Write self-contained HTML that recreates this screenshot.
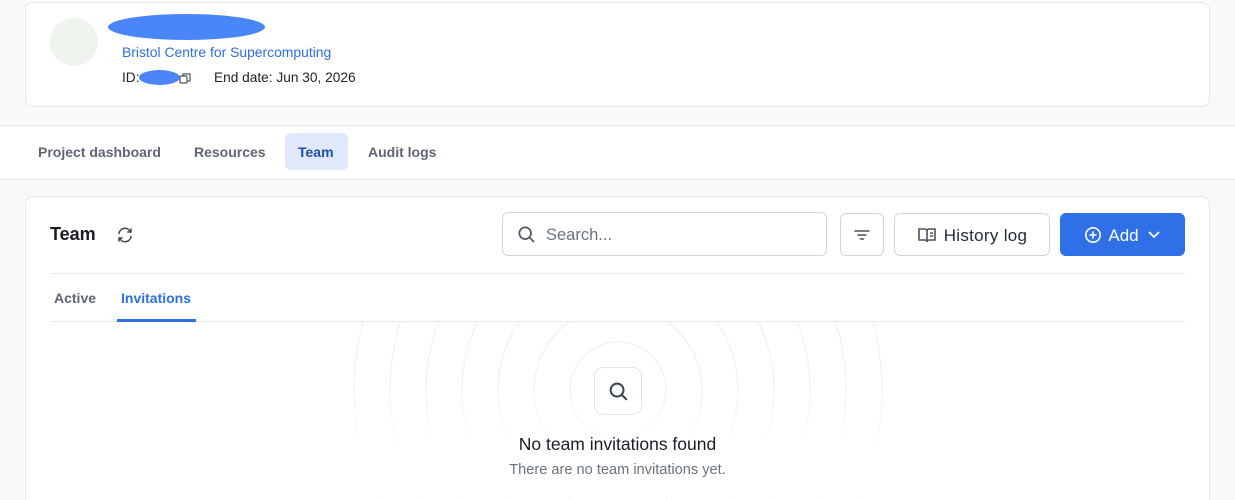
<!DOCTYPE html>
<html><head><meta charset="utf-8"><style>
*{box-sizing:border-box;margin:0;padding:0}
html,body{width:1235px;height:500px;overflow:hidden}
body{background:#f8f9fb;font-family:"Liberation Sans",sans-serif;position:relative}
.abs{position:absolute}
.card{position:absolute;background:#fff;border:1px solid #e5e7eb;border-radius:8px}
.btn{position:absolute;border:1px solid #d1d5db;border-radius:6px;background:#fff;display:flex;align-items:center;justify-content:center}
</style></head><body>
<div class="card" style="left:25px;top:2px;width:1185px;height:105px"></div>
<div class="abs" style="left:50px;top:18px;width:48px;height:48px;border-radius:50%;background:#f0f4ee"></div>
<div class="abs" style="left:108px;top:14px;width:157px;height:26px;border-radius:50%;background:#4a86f7"></div>
<div class="abs" style="left:122px;top:44px;font-size:13.9px;color:#2f6fe0">Bristol Centre for Supercomputing</div>
<div class="abs" style="left:122px;top:70px;font-size:13.7px;color:#222">ID:</div>
<div class="abs" style="left:139px;top:70px;width:41px;height:15px;border-radius:50%;background:#4a86f7"></div>
<svg class="abs" style="left:179px;top:72px" width="13" height="13" viewBox="0 0 13 13" fill="none" stroke="#555" stroke-width="1.2"><rect x="1" y="4" width="7" height="7" rx="1"/><path d="M4 4V2h7v7H8"/></svg>
<div class="abs" style="left:214px;top:70px;font-size:13.7px;color:#222">End date: Jun 30, 2026</div>

<div class="abs" style="left:0;top:125px;width:1235px;height:55px;background:#fff;border-top:1px solid #e5e7eb;border-bottom:1px solid #e5e7eb"></div>
<div class="abs" style="left:38px;top:144px;font-size:14px;font-weight:bold;color:#5f6675">Project dashboard</div>
<div class="abs" style="left:194px;top:144px;font-size:14px;font-weight:bold;color:#5f6675">Resources</div>
<div class="abs" style="left:285px;top:133px;width:63px;height:37px;border-radius:6px;background:#dfe9fb"></div>
<div class="abs" style="left:298px;top:144px;font-size:14px;font-weight:bold;color:#1e4fa8">Team</div>
<div class="abs" style="left:368px;top:144px;font-size:14px;font-weight:bold;color:#5f6675">Audit logs</div>

<div class="card" style="left:25px;top:196px;width:1185px;height:304px;border-bottom:none;border-radius:8px 8px 0 0"></div>
<div class="abs" style="left:50px;top:224px;font-size:18px;font-weight:bold;color:#1a1d24">Team</div>
<svg class="abs" style="left:116px;top:226px" width="18" height="18" viewBox="0 0 24 24" fill="none" stroke="#444" stroke-width="2" stroke-linecap="round"><path d="M4 10a8 8 0 0 1 14.5-3.5M20 4v4h-4M20 14a8 8 0 0 1-14.5 3.5M4 20v-4h4"/></svg>
<div class="btn" style="left:502px;top:212px;width:325px;height:44px;justify-content:flex-start;padding-left:13px">
<svg width="20" height="20" viewBox="0 0 24 24" fill="none" stroke="#4b5260" stroke-width="2" stroke-linecap="round"><circle cx="11" cy="11" r="7"/><path d="M16 16l5 5"/></svg>
<span style="margin-left:10px;font-size:16.5px;color:#6b7280;line-height:20px;padding-top:2px">Search...</span></div>
<div class="btn" style="left:840px;top:213px;width:44px;height:43px">
<svg width="18" height="14" viewBox="0 0 18 14" stroke="#4b5260" stroke-width="1.6" stroke-linecap="round"><path d="M2 3h14M5 7h8M7.5 11h3"/></svg></div>
<div class="btn" style="left:894px;top:213px;width:156px;height:43px">
<svg width="20" height="18" viewBox="0 0 20 18" fill="none" stroke="#4b5260" stroke-width="1.6"><path d="M2 3h6a2 2 0 0 1 2 2v11a2 2 0 0 0-2-2H2zM18 3h-6a2 2 0 0 0-2 2v11a2 2 0 0 1 2-2h6z"/><path d="M13 7h3M13 10h3"/></svg>
<span style="margin-left:7px;font-size:17px;color:#1f2937;line-height:20px;padding-top:3px;letter-spacing:0.3px">History log</span></div>
<div class="abs" style="left:1060px;top:213px;width:125px;height:43px;border-radius:6px;background:#2f6fe8;display:flex;align-items:center;justify-content:center;color:#fff;font-size:17px">
<svg width="18" height="18" viewBox="0 0 20 20" fill="none" stroke="#fff" stroke-width="1.8"><circle cx="10" cy="10" r="8"/><path d="M10 6v8M6 10h8"/></svg>
<span style="margin:0 8px 0 6px;line-height:20px;padding-top:3px">Add</span>
<svg width="14" height="10" viewBox="0 0 14 10" fill="none" stroke="#fff" stroke-width="1.8"><path d="M2 2l5 5 5-5"/></svg></div>
<div class="abs" style="left:50px;top:273px;width:1135px;height:1px;background:#e5e7eb"></div>
<div class="abs" style="left:54px;top:290px;font-size:14px;font-weight:bold;color:#5f6675">Active</div>
<div class="abs" style="left:121px;top:290px;font-size:14px;font-weight:bold;color:#2f6fe0">Invitations</div>
<div class="abs" style="left:50px;top:321px;width:1135px;height:1px;background:#e5e7eb"></div>
<div class="abs" style="left:117px;top:319px;width:79px;height:3px;background:#2f6fe0"></div>
<svg class="abs" style="left:340px;top:322px" width="560" height="178" viewBox="340 322 560 178" fill="none" stroke="#eceef2" stroke-width="1">
<defs><linearGradient id="g" x1="0" y1="322" x2="0" y2="450" gradientUnits="userSpaceOnUse"><stop offset="0" stop-color="#fff"/><stop offset="0.55" stop-color="#fff"/><stop offset="1" stop-color="#000"/></linearGradient>
<mask id="m"><rect x="340" y="322" width="560" height="178" fill="url(#g)"/></mask></defs>
<g mask="url(#m)">
<circle cx="618" cy="390" r="48"/><circle cx="618" cy="390" r="84"/><circle cx="618" cy="390" r="120"/><circle cx="618" cy="390" r="156"/><circle cx="618" cy="390" r="192"/><circle cx="618" cy="390" r="228"/><circle cx="618" cy="390" r="264"/></g></svg>
<div class="abs" style="left:594px;top:367px;width:48px;height:48px;border:1px solid #e2e5ea;border-radius:9px;background:#fff;display:flex;align-items:center;justify-content:center">
<svg width="22" height="22" viewBox="0 0 24 24" fill="none" stroke="#374151" stroke-width="2.2" stroke-linecap="round"><circle cx="11" cy="11" r="7"/><path d="M16 16l5 5"/></svg></div>
<div class="abs" style="left:0;width:1235px;top:434px;text-align:center;font-size:17.5px;color:#1a1d24">No team invitations found</div>
<div class="abs" style="left:0;width:1235px;top:462px;text-align:center;font-size:14.6px;color:#6b7280">There are no team invitations yet.</div>
</body></html>
